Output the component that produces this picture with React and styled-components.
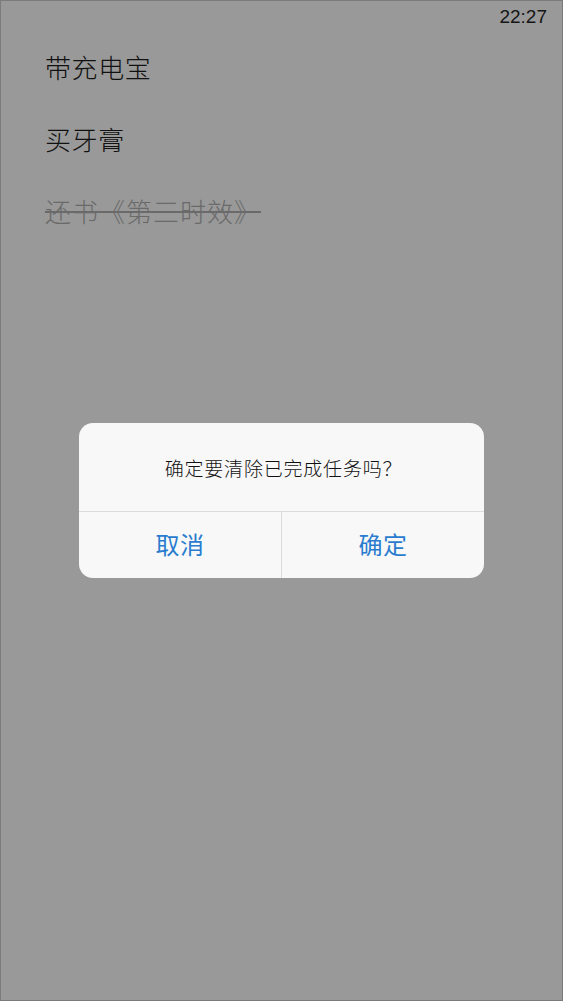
import React from 'react';
import styled, { createGlobalStyle } from 'styled-components';

const GlobalStyle = createGlobalStyle`
  * {
    box-sizing: border-box;
  }

  html,
  body {
    margin: 0;
    padding: 0;
    background: #999999;
  }

  body {
    font-family: "Noto Sans CJK SC", "Noto Sans", sans-serif;
  }
`;

const StyledScreen = styled.div`
  position: relative;
  width: 563px;
  height: 1001px;
  background: #999999;
  border: 1px solid #7b7b7b;
  overflow: hidden;
`;

const StyledStatusBar = styled.div`
  display: flex;
  justify-content: flex-end;
  align-items: center;
  height: 32px;
  padding: 0 15px 0 0;
  font-family: "Liberation Sans", Arial, sans-serif;
  font-size: 19px;
  color: #151515;
`;

const StyledTaskList = styled.ul`
  list-style: none;
  margin: 0;
  padding: 0 0 0 44px;
`;

const StyledTask = styled.li`
  display: flex;
  align-items: center;
  height: 72px;
  margin-top: ${({ first }) => (first ? '-3px' : '0')};
  font-size: 26px;
  font-weight: 300;
  letter-spacing: ${({ done }) => (done ? '1px' : '0.6px')};
  color: ${({ done }) => (done ? '#6a6a6a' : '#111111')};
  text-decoration: ${({ done }) => (done ? 'line-through' : 'none')};
  text-decoration-color: #6a6a6a;
  text-decoration-thickness: 1.5px;
`;

const StyledOverlay = styled.div`
  position: absolute;
  inset: 0;
  display: flex;
  align-items: center;
  justify-content: center;
`;

const StyledDialog = styled.div`
  width: 405px;
  background: #f8f8f8;
  border-radius: 14px;
  overflow: hidden;
  margin-top: -1px;
`;

const StyledMessage = styled.div`
  display: flex;
  align-items: center;
  justify-content: center;
  height: 89px;
  padding: 2px 0 0 4px;
  font-size: 19px;
  font-weight: 300;
  letter-spacing: 0.8px;
  color: #111111;
  border-bottom: 1px solid #dcdcdc;
`;

const StyledActions = styled.div`
  display: grid;
  grid-template-columns: 202px 1fr;
  height: 66px;
`;

const StyledActionButton = styled.button`
  display: flex;
  align-items: center;
  justify-content: center;
  margin: 0;
  padding: 0 0 2px;
  border: none;
  border-left: ${({ divided }) => (divided ? '1px solid #dcdcdc' : 'none')};
  background: transparent;
  font-family: "Noto Sans CJK SC", "Noto Sans", sans-serif;
  font-size: 24px;
  font-weight: 400;
  letter-spacing: 0.5px;
  color: #2a7ccf;
  cursor: pointer;
`;

const tasks = [
  { title: '带充电宝', done: false },
  { title: '买牙膏', done: false },
  { title: '还书《第三时效》', done: true },
];

const App = () => (
  <>
    <GlobalStyle />
    <StyledScreen>
      <StyledStatusBar>22:27</StyledStatusBar>
      <StyledTaskList>
        {tasks.map((task, i) => (
          <StyledTask key={i} first={i === 0} done={task.done}>
            {task.title}
          </StyledTask>
        ))}
      </StyledTaskList>
      <StyledOverlay>
        <StyledDialog>
          <StyledMessage>确定要清除已完成任务吗？</StyledMessage>
          <StyledActions>
            <StyledActionButton>取消</StyledActionButton>
            <StyledActionButton divided>确定</StyledActionButton>
          </StyledActions>
        </StyledDialog>
      </StyledOverlay>
    </StyledScreen>
  </>
);

export default App;
